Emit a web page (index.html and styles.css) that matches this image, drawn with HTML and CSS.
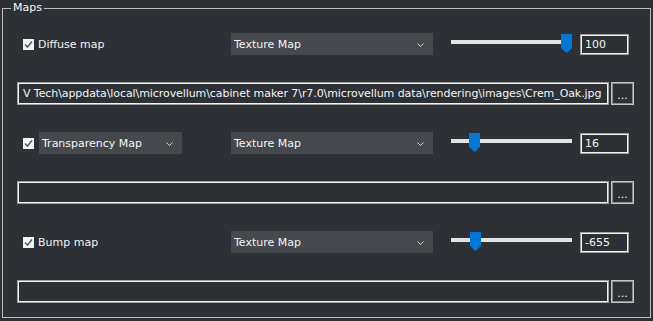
FILE: index.html
```html
<!DOCTYPE html>
<html lang="en">
<head>
    <meta charset="UTF-8">
    <meta name="viewport" content="width=device-width, initial-scale=1.0">
    <title>Maps</title>
    <link rel="stylesheet" href="styles.css">
</head>
<body>
    <fieldset class="maps">
        <legend>Maps</legend>
        <div class="maps-body">
            <div class="map-row">
                <label class="check">
                    <span class="box"><svg width="11" height="11" viewBox="0 0 11 11"><polyline points="2,5.5 4.5,8 9,2.5" fill="none" stroke="#5a5a5a" stroke-width="1.6"/></svg></span>
                    <span>Diffuse map</span>
                </label>
                <div class="dropdown">
                    <span>Texture Map</span>
                    <svg class="chevron" width="7" height="4" viewBox="0 0 7 4"><polyline points="0.5,0.5 3.5,3.5 6.5,0.5" fill="none" stroke="#d0d0d0" stroke-width="1"/></svg>
                </div>
                <div class="slider">
                    <div class="track"></div>
                    <svg class="thumb" style="left: 110px" width="11" height="19" viewBox="0 0 11 19"><path d="M0 0 H11 V14 L5.5 19 L0 14 Z" fill="#0078d7"/></svg>
                </div>
                <div class="number">100</div>
            </div>
            <div class="path-row">
                <div class="path">V Tech\appdata\local\microvellum\cabinet maker 7\r7.0\microvellum data\rendering\images\Crem_Oak.jpg</div>
                <button class="browse">...</button>
            </div>

            <div class="map-row">
                <div class="check check-select">
                    <span class="box"><svg width="11" height="11" viewBox="0 0 11 11"><polyline points="2,5.5 4.5,8 9,2.5" fill="none" stroke="#5a5a5a" stroke-width="1.6"/></svg></span>
                    <div class="dropdown dropdown-small">
                        <span>Transparency Map</span>
                        <svg class="chevron" width="7" height="4" viewBox="0 0 7 4"><polyline points="0.5,0.5 3.5,3.5 6.5,0.5" fill="none" stroke="#d0d0d0" stroke-width="1"/></svg>
                    </div>
                </div>
                <div class="dropdown">
                    <span>Texture Map</span>
                    <svg class="chevron" width="7" height="4" viewBox="0 0 7 4"><polyline points="0.5,0.5 3.5,3.5 6.5,0.5" fill="none" stroke="#d0d0d0" stroke-width="1"/></svg>
                </div>
                <div class="slider">
                    <div class="track"></div>
                    <svg class="thumb" style="left: 18px" width="11" height="19" viewBox="0 0 11 19"><path d="M0 0 H11 V14 L5.5 19 L0 14 Z" fill="#0078d7"/></svg>
                </div>
                <div class="number">16</div>
            </div>
            <div class="path-row">
                <div class="path"></div>
                <button class="browse">...</button>
            </div>

            <div class="map-row">
                <label class="check">
                    <span class="box"><svg width="11" height="11" viewBox="0 0 11 11"><polyline points="2,5.5 4.5,8 9,2.5" fill="none" stroke="#5a5a5a" stroke-width="1.6"/></svg></span>
                    <span>Bump map</span>
                </label>
                <div class="dropdown">
                    <span>Texture Map</span>
                    <svg class="chevron" width="7" height="4" viewBox="0 0 7 4"><polyline points="0.5,0.5 3.5,3.5 6.5,0.5" fill="none" stroke="#d0d0d0" stroke-width="1"/></svg>
                </div>
                <div class="slider">
                    <div class="track"></div>
                    <svg class="thumb" style="left: 19px" width="11" height="19" viewBox="0 0 11 19"><path d="M0 0 H11 V14 L5.5 19 L0 14 Z" fill="#0078d7"/></svg>
                </div>
                <div class="number">-655</div>
            </div>
            <div class="path-row">
                <div class="path"></div>
                <button class="browse">...</button>
            </div>
        </div>
    </fieldset>
</body>
</html>
```

FILE: styles.css
```css
body {
    margin: 0;
    background-color: #2d3035;
    color: #f4f4f4;
    font-family: "DejaVu Sans", sans-serif;
    font-size: 11px;
    height: 321px;
    overflow: hidden;
}

.maps {
    margin: 1px 2px 0 2px;
    padding: 0;
    height: 317px;
    box-sizing: border-box;
    border: 1px solid #bdbdbd;
    min-width: 0;
}

.maps legend {
    margin-left: 8px;
    padding: 0 2px;
    line-height: 14px;
}

.maps-body {
    display: flex;
    flex-direction: column;
    gap: 27px;
    padding: 18px 0 0 14px;
}

.map-row {
    display: flex;
    align-items: center;
    height: 22px;
    padding-left: 6px;
}

.check {
    display: flex;
    align-items: center;
    gap: 4px;
    width: 208px;
}

.check-select {
    gap: 5px;
}

.box {
    display: block;
    width: 11px;
    height: 11px;
    background-color: #f4f4f4;
}

.box svg {
    display: block;
}

.dropdown {
    display: flex;
    align-items: center;
    justify-content: space-between;
    width: 202px;
    height: 22px;
    box-sizing: border-box;
    padding: 0 9px 0 3px;
    background-color: #45484d;
}

.dropdown-small {
    width: 143px;
}

.chevron {
    display: block;
    margin-top: 2px;
}

.slider {
    position: relative;
    width: 121px;
    height: 22px;
    margin-left: 18px;
}

.track {
    position: absolute;
    left: 0;
    right: 0;
    top: 7px;
    height: 4px;
    background-color: #e3e3e3;
}

.thumb {
    position: absolute;
    top: 1px;
    display: block;
}

.number {
    width: 49px;
    height: 21px;
    box-sizing: border-box;
    margin-left: 8px;
    padding-left: 4px;
    line-height: 17px;
    border: 1px solid #a0a0a0;
    box-shadow: inset 0 0 0 1px #f4f4f4;
    padding-top: 1px;
}

.path-row {
    display: flex;
    align-items: center;
    height: 23px;
}

.path {
    width: 592px;
    height: 23px;
    box-sizing: border-box;
    padding: 2px 0 0 5px;
    line-height: 17px;
    letter-spacing: -0.08px;
    white-space: nowrap;
    overflow: hidden;
    border: 1px solid #a0a0a0;
    box-shadow: inset 0 0 0 1px #f4f4f4;
}

.browse {
    width: 23px;
    height: 23px;
    margin-left: 2px;
    padding: 4px 0 0;
    background-color: #2d3035;
    color: #f4f4f4;
    font-family: "DejaVu Sans", sans-serif;
    font-size: 11px;
    border: 1px solid #c4c4c4;
    box-shadow: inset 0 0 0 1px #8a8a8a;
}
```
